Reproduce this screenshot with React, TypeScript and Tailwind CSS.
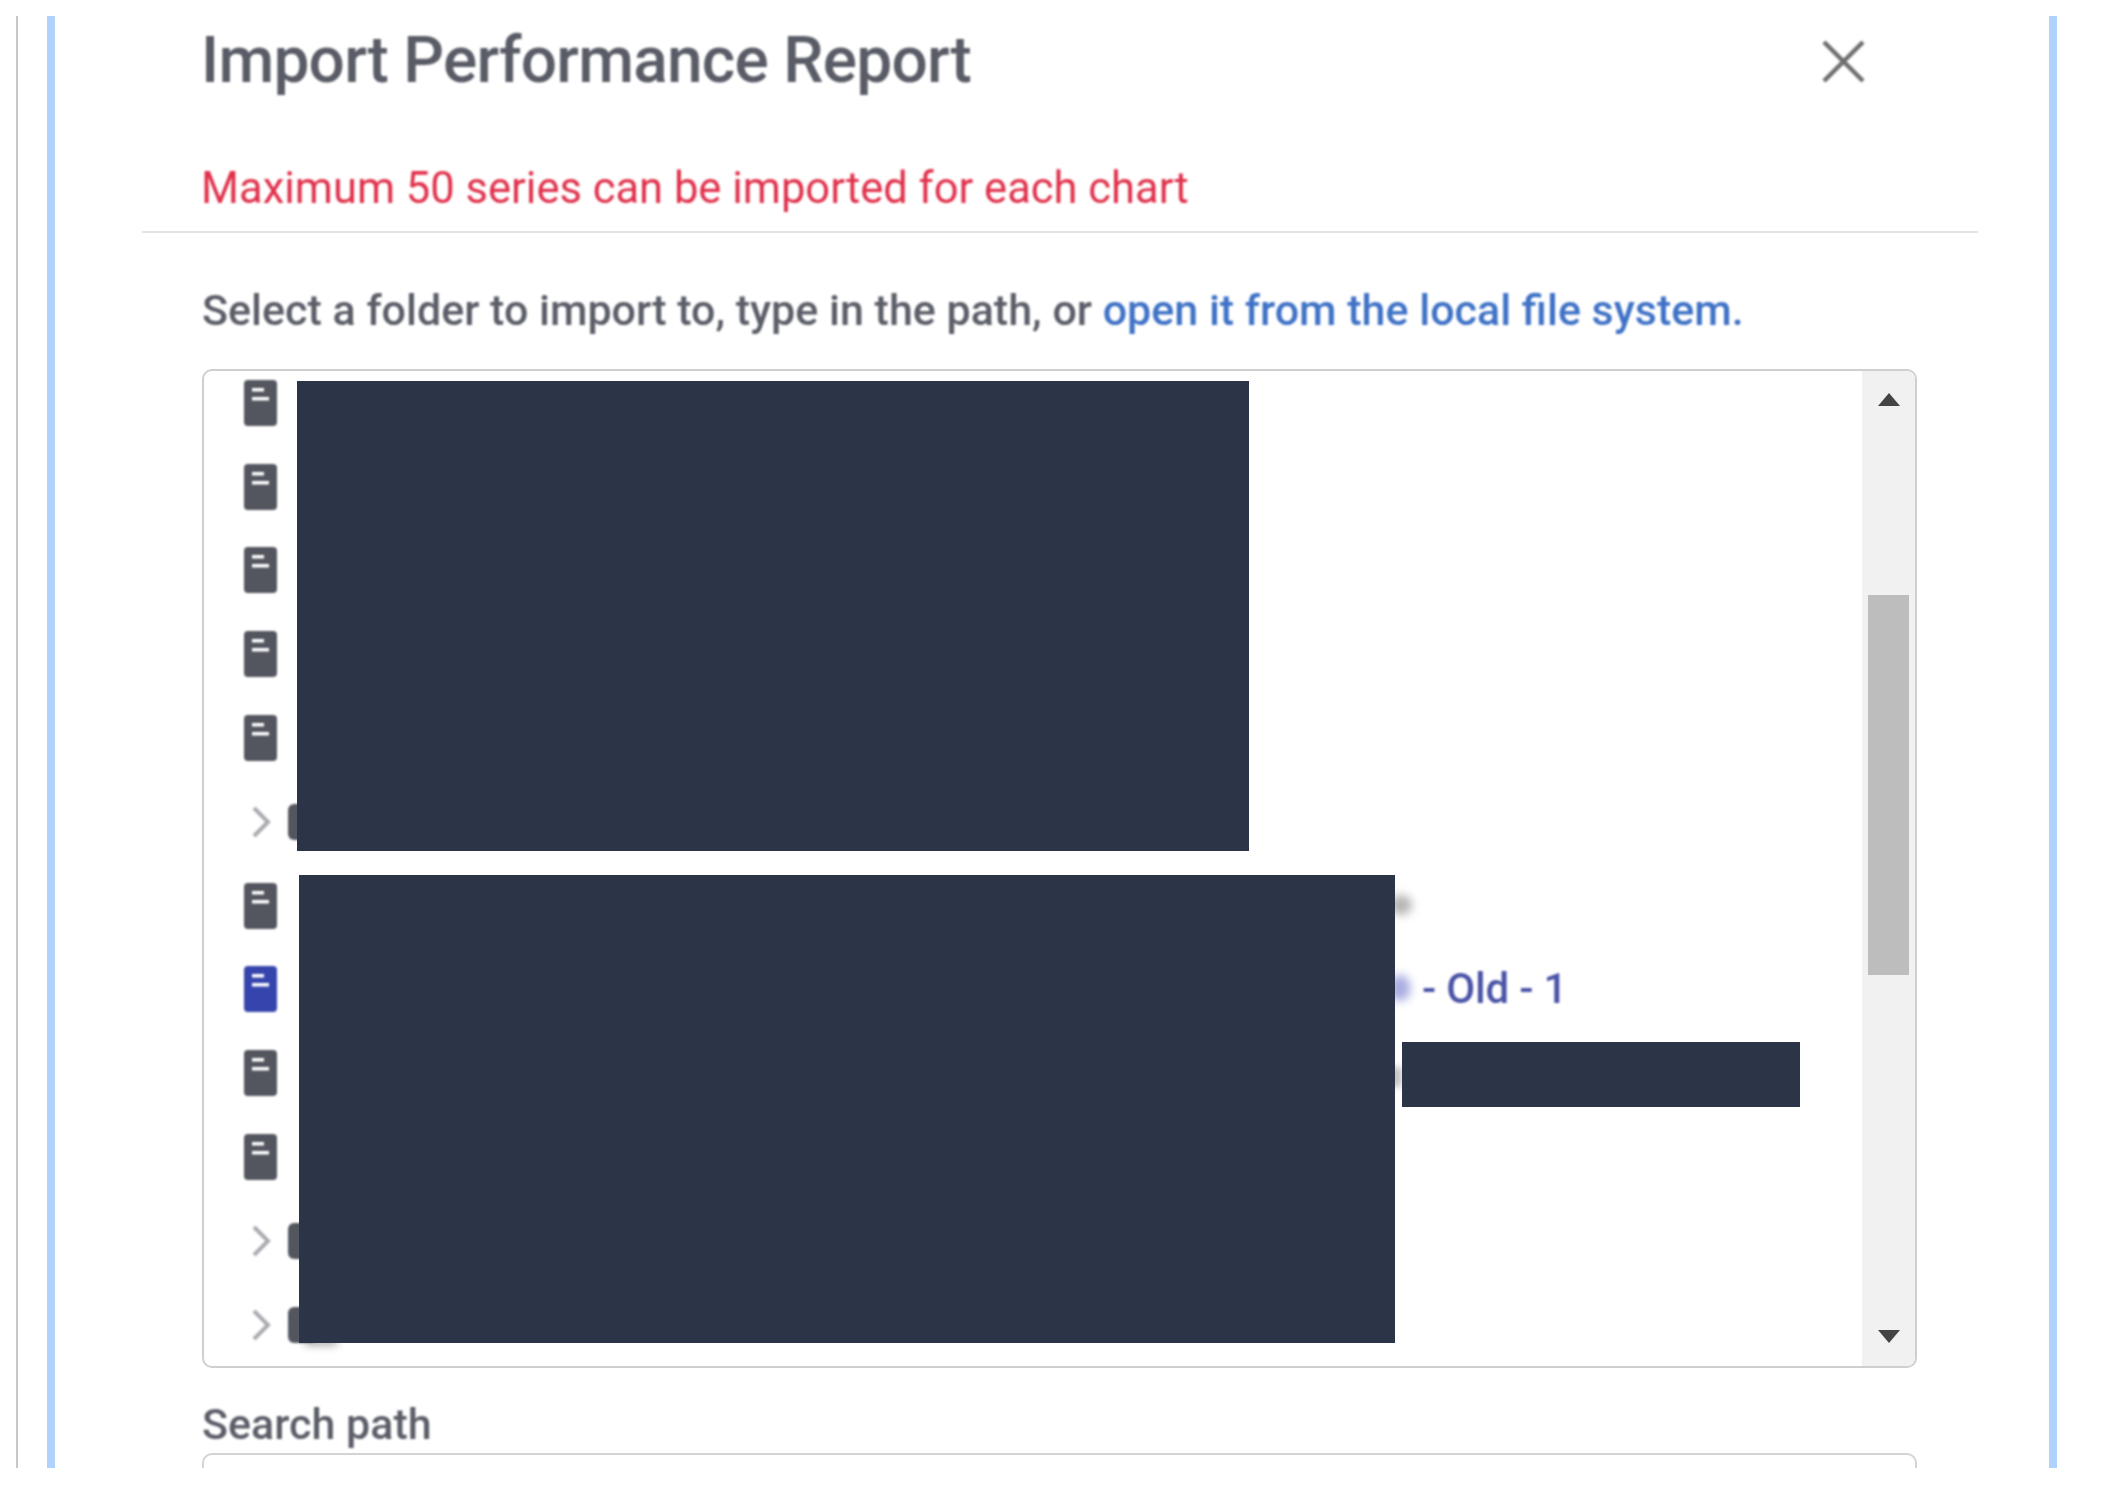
import React from 'react';

type RowKind = 'file' | 'active' | 'folder';

const rows: { kind: RowKind; tail?: string }[] = [
  { kind: 'file' },
  { kind: 'file' },
  { kind: 'file' },
  { kind: 'file' },
  { kind: 'file' },
  { kind: 'folder' },
  { kind: 'file' },
  { kind: 'active', tail: '- Old - 1' },
  { kind: 'file' },
  { kind: 'file' },
  { kind: 'folder' },
  { kind: 'folder' },
];

const FileIcon: React.FC<{ active?: boolean }> = ({ active }) => (
  <svg width="33" height="46" viewBox="0 0 33 46" className="blur-[1px]">
    <rect width="33" height="46" rx="4" fill={active ? '#3645ad' : '#53565f'} />
    <rect x="8" y="8" width="12" height="3.5" fill="#ffffff" />
    <rect x="8" y="17" width="17" height="3.5" fill="#ffffff" />
  </svg>
);

const Chevron: React.FC = () => (
  <svg width="20" height="32" viewBox="0 0 20 32" className="blur-[1px]">
    <path d="M3 2 L17 16 L3 30" fill="none" stroke="#a9abb0" strokeWidth="4" />
  </svg>
);

const TreeRow: React.FC<{ kind: RowKind; tail?: string }> = ({ kind, tail }) => (
  <div className="flex h-[83.8px] items-center pl-[40px]">
    {kind === 'folder' ? (
      <>
        <div className="ml-[7px]">
          <Chevron />
        </div>
        <div className="ml-[17px] h-[36px] w-[30px] rounded-md bg-[#53565f] blur-[1px]" />
      </>
    ) : (
      <FileIcon active={kind === 'active'} />
    )}
    {tail && (
      <span className="ml-[1145px] text-[42px] font-medium leading-none tracking-[-0.2px] text-[#4a53a6] blur-[1px]">
        {tail}
      </span>
    )}
  </div>
);

export default function App() {
  return (
    <div className="h-[1493px] bg-white pl-4 pt-4 font-['Roboto',sans-serif]">
      <div className="flex h-[1452px] overflow-hidden">
        <div className="w-[2px] bg-[#c8c8c8]" />
        <div className="ml-[29px] w-[2010px] border-x-8 border-[#afd2ff] pl-[87px] pr-[71px]">
          {/* header */}
          <div className="flex h-[90px] items-center justify-between pl-[59px] pr-[113px]">
            <h1 className="text-[64px] font-medium leading-none tracking-[-0.75px] text-[#595c66] blur-[1px]">
              Import Performance Report
            </h1>
            <svg width="43" height="43" viewBox="0 0 43 43" className="blur-[0.8px]">
              <path d="M2 2 L41 41 M41 2 L2 41" stroke="#6e6e6e" strokeWidth="4.5" />
            </svg>
          </div>
          <div className="flex h-[127px] items-center border-b-2 border-[#e4e4e4] pl-[59px] pt-[41px]">
            <p className="text-[43.5px] leading-none text-[#e0314b] blur-[1px]">
              Maximum 50 series can be imported for each chart
            </p>
          </div>

          <div className="pl-[60px] pr-[61px]">
            <p className="flex h-[136px] items-center pt-[18px] text-[43px] font-medium leading-none text-[#5b5e68] blur-[1px]">
              <span className="whitespace-pre">
                Select a folder to import to, type in the path, or{' '}
                <span className="text-[#3f72c6]">open it from the local file system.</span>
              </span>
            </p>

            {/* tree */}
            <div className="relative flex h-[999px] overflow-hidden rounded-[10px] border-2 border-[#cfcfd2]">
              <div className="min-w-0 flex-1">
                <div className="-mt-[10px]">
                  {rows.map((row, i) => (
                    <TreeRow key={i} kind={row.kind} tail={row.tail} />
                  ))}
                </div>
              </div>
              <div className="flex w-[53px] flex-col items-center bg-[#f1f1f1]">
                <div className="mt-[22px] h-0 w-0 border-x-[11px] border-b-[13px] border-x-transparent border-b-[#444444]" />
                <div className="mt-[189px] h-[380px] w-[41px] bg-[#bdbdbd]" />
                <div className="mt-[355px] h-0 w-0 border-x-[11px] border-t-[13px] border-x-transparent border-t-[#444444]" />
              </div>
              {/* text left showing round the redactions */}
              <div className="absolute left-[1186px] top-[524px] h-[20px] w-[22px] rounded-full bg-[#b4b4b4] blur-[5px]" />
              <div className="absolute left-[1186px] top-[604px] h-[26px] w-[20px] rounded-full bg-[#a8abe0] blur-[5px]" />
              <div className="absolute left-[1186px] top-[696px] h-[20px] w-[12px] bg-[#c4c4c4] blur-[3px]" />
              <div className="absolute left-[101px] top-[966px] h-[8px] w-[32px] bg-[#a0a0a0] blur-[4px]" />
              {/* redacted blocks */}
              <div className="absolute left-[93px] top-[10px] h-[470px] w-[952px] bg-[#2b3547]" />
              <div className="absolute left-[95px] top-[504px] h-[468px] w-[1096px] bg-[#2b3547]" />
              <div className="absolute left-[1198px] top-[671px] h-[65px] w-[398px] bg-[#2b3547]" />
            </div>

            <div className="flex h-[85px] items-center pt-[28px] text-[43px] font-medium leading-none text-[#5b5e68] blur-[1px]">
              Search path
            </div>
            <div className="h-[40px] rounded-[10px] border-2 border-[#d2d4d8]" />
          </div>
        </div>
      </div>
    </div>
  );
}
